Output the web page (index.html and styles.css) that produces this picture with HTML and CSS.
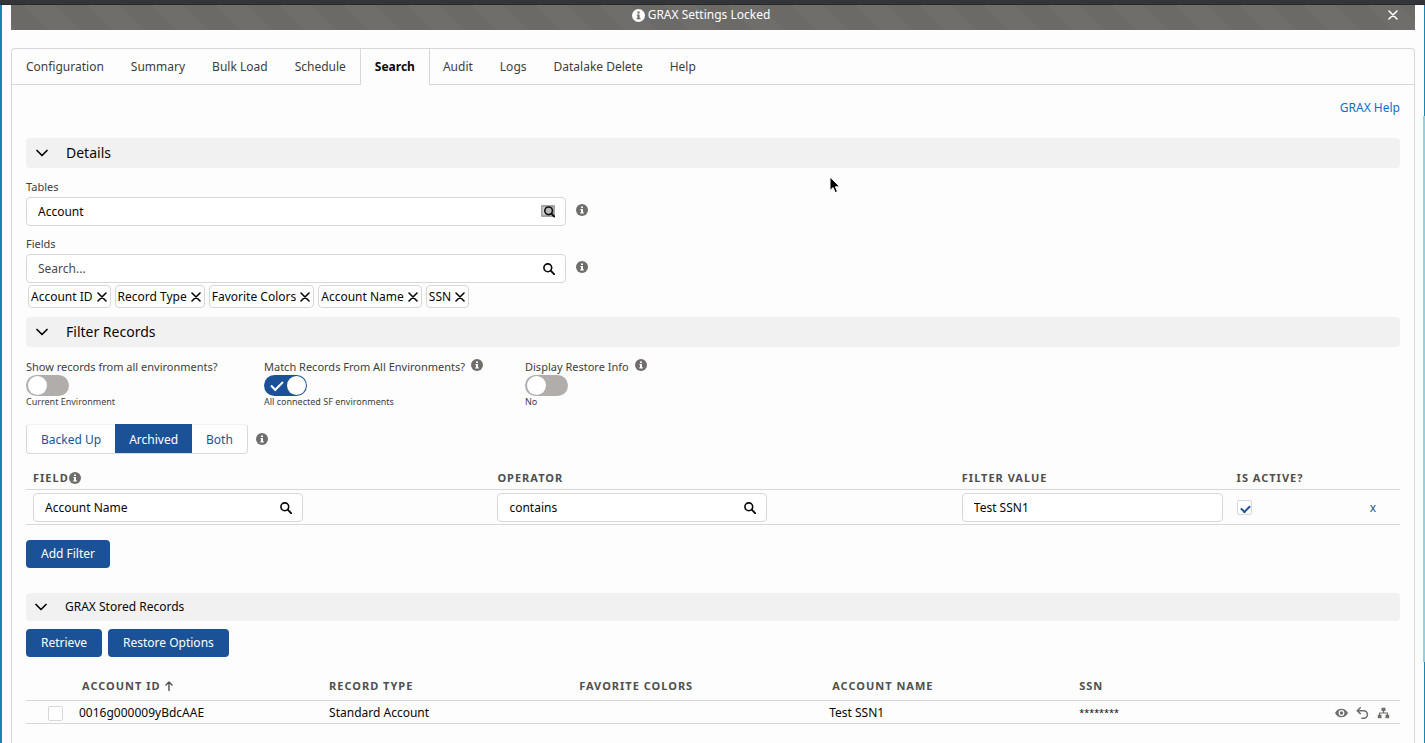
FILE: index.html
```
<!DOCTYPE html>
<html lang="en">
<head>
<meta charset="utf-8">
<title>GRAX Search</title>
<link rel="stylesheet" href="styles.css">
</head>
<body>
<svg class="sprite" aria-hidden="true">
  <symbol id="info" viewBox="0 0 12 12"><circle cx="6" cy="6" r="6" fill="currentColor"/><path class="cutout" d="M5 2.4h2v1.7H5zM4.4 5H7v3.2h.8v1.2H4.3V8.2H5V6.1h-.6z"/></symbol>
  <symbol id="search" viewBox="0 0 12 12"><circle cx="4.8" cy="4.8" r="3.9" fill="none" stroke="currentColor" stroke-width="1.6"/><path d="M7.7 7.7l3.6 3.6" stroke="currentColor" stroke-width="1.9" stroke-linecap="round"/></symbol>
  <symbol id="close" viewBox="0 0 10 10"><path d="M1 1l8 8M9 1l-8 8" fill="none" stroke="currentColor" stroke-width="1.6" stroke-linecap="round"/></symbol>
  <symbol id="chevron" viewBox="0 0 12 8"><path d="M1 1.5l5 5 5-5" fill="none" stroke="currentColor" stroke-width="1.7" stroke-linecap="round" stroke-linejoin="round"/></symbol>
</svg>
<div class="browser-edge"></div>
<div class="page">
  <div class="banner" role="status">
    <span class="banner-text"><svg class="banner-info"><use href="#info"/></svg>GRAX Settings Locked</span>
    <button class="banner-close" aria-label="Close"><svg class="x-icon"><use href="#close"/></svg></button>
  </div>
  <main class="card">
    <nav class="tabs">
      <a class="tab" href="#">Configuration</a>
      <a class="tab" href="#">Summary</a>
      <a class="tab" href="#">Bulk Load</a>
      <a class="tab" href="#">Schedule</a>
      <a class="tab active" href="#" aria-current="page">Search</a>
      <a class="tab" href="#">Audit</a>
      <a class="tab" href="#">Logs</a>
      <a class="tab" href="#">Datalake Delete</a>
      <a class="tab" href="#">Help</a>
    </nav>
    <div class="content">
      <div class="help-row"><a class="help-link" href="#">GRAX Help</a></div>

      <button class="section"><svg class="chevron"><use href="#chevron"/></svg>Details</button>
      <div class="lookups">
        <div class="lookup">
          <label class="label" for="tables">Tables</label>
          <div class="lookup-row">
            <div class="field"><input id="tables" class="field-input" type="text" value="Account">
              <svg class="table-search" viewBox="0 0 14 13"><rect x="0" y="0" width="14" height="12" rx="1" fill="#a3a3a3"/><rect x="1.5" y="2" width="3" height="8" fill="#d0d0d0"/><circle cx="7.6" cy="5.8" r="3.8" fill="#bbb" stroke="#111" stroke-width="1.6"/><path d="M10.4 8.6l2.8 2.9" stroke="#111" stroke-width="1.9" stroke-linecap="round"/></svg>
            </div>
            <svg class="info"><use href="#info"/></svg>
          </div>
        </div>
        <div class="lookup">
          <label class="label" for="fields">Fields</label>
          <div class="lookup-row">
            <div class="field"><input id="fields" class="field-input" type="text" placeholder="Search..."><svg class="search"><use href="#search"/></svg></div>
            <svg class="info"><use href="#info"/></svg>
          </div>
        </div>
      </div>
      <div class="chips">
        <span class="chip">Account ID<button class="chip-x" aria-label="Remove Account ID"><svg class="x-icon"><use href="#close"/></svg></button></span>
        <span class="chip">Record Type<button class="chip-x" aria-label="Remove Record Type"><svg class="x-icon"><use href="#close"/></svg></button></span>
        <span class="chip">Favorite Colors<button class="chip-x" aria-label="Remove Favorite Colors"><svg class="x-icon"><use href="#close"/></svg></button></span>
        <span class="chip">Account Name<button class="chip-x" aria-label="Remove Account Name"><svg class="x-icon"><use href="#close"/></svg></button></span>
        <span class="chip">SSN<button class="chip-x" aria-label="Remove SSN"><svg class="x-icon"><use href="#close"/></svg></button></span>
      </div>

      <button class="section"><svg class="chevron"><use href="#chevron"/></svg>Filter Records</button>
      <div class="toggles">
        <div class="toggle-group">
          <div class="toggle-head"><label class="label" for="show-all">Show records from all environments?</label></div>
          <input id="show-all" class="toggle" type="checkbox">
          <span class="toggle-note">Current Environment</span>
        </div>
        <div class="toggle-group">
          <div class="toggle-head"><label class="label" for="match-all">Match Records From All Environments?</label><svg class="info"><use href="#info"/></svg></div>
          <input id="match-all" class="toggle" type="checkbox" checked>
          <span class="toggle-note">All connected SF environments</span>
        </div>
        <div class="toggle-group">
          <div class="toggle-head"><label class="label" for="restore-info">Display Restore Info</label><svg class="info"><use href="#info"/></svg></div>
          <input id="restore-info" class="toggle" type="checkbox">
          <span class="toggle-note">No</span>
        </div>
      </div>
      <div class="scope">
        <div class="segments">
          <button class="segment">Backed Up</button><button class="segment selected">Archived</button><button class="segment">Both</button>
        </div>
        <svg class="info"><use href="#info"/></svg>
      </div>

      <table class="grid filters">
        <colgroup><col class="col-field"><col class="col-operator"><col class="col-value"><col class="col-active"><col></colgroup>
        <thead><tr>
          <th><span class="th-info">Field<svg class="info"><use href="#info"/></svg></span></th>
          <th>Operator</th><th>Filter Value</th><th>Is Active?</th><th></th>
        </tr></thead>
        <tbody><tr>
          <td><div class="field short"><input class="field-input" type="text" aria-label="Field" value="Account Name"><svg class="search"><use href="#search"/></svg></div></td>
          <td><div class="field short"><input class="field-input" type="text" aria-label="Operator" value="contains"><svg class="search"><use href="#search"/></svg></div></td>
          <td><div class="field"><input class="field-input" type="text" aria-label="Filter Value" value="Test SSN1"></div></td>
          <td><input class="check" type="checkbox" aria-label="Is active" checked></td>
          <td class="remove-cell"><button class="remove">x</button></td>
        </tr></tbody>
      </table>
      <div class="actions add"><button class="button">Add Filter</button></div>

      <button class="section small"><svg class="chevron"><use href="#chevron"/></svg>GRAX Stored Records</button>
      <div class="actions"><button class="button">Retrieve</button><button class="button">Restore Options</button></div>
      <table class="grid results">
        <colgroup><col class="col-check"><col class="col-data"><col class="col-data"><col class="col-data"><col class="col-data"><col></colgroup>
        <thead><tr>
          <th></th>
          <th class="inset"><span class="th-info sorted">Account ID<svg class="sort" viewBox="0 0 8 10"><path d="M4 9.5V1M1 4l3-3 3 3" fill="none" stroke="currentColor" stroke-width="1.4" stroke-linecap="round" stroke-linejoin="round"/></svg></span></th>
          <th>Record Type</th><th>Favorite Colors</th><th class="inset">Account Name</th><th>SSN</th>
        </tr></thead>
        <tbody><tr>
          <td class="check-cell"><input class="check" type="checkbox" aria-label="Select record"></td>
          <td>0016g000009yBdcAAE</td><td>Standard Account</td><td></td><td>Test SSN1</td>
          <td><div class="ssn-cell"><span class="masked">********</span>
            <span class="row-actions">
              <button class="icon-button" aria-label="View"><svg class="row-icon" viewBox="0 0 13 12"><path fill="currentColor" fill-rule="evenodd" d="M0 6C1.4 3.2 3.7 1.7 6.5 1.7S11.6 3.2 13 6c-1.4 2.8-3.7 4.3-6.5 4.3S1.4 8.8 0 6zm6.5-2.9a2.9 2.9 0 100 5.800 2.900 2.900 0 000-5.800z"/><circle cx="6.5" cy="6" r="1.7" fill="currentColor"/></svg></button>
              <button class="icon-button" aria-label="Restore"><svg class="row-icon" viewBox="0 0 13 12"><path d="M4.300 .8L1.200 3.700l3.100 2.900M1.400 3.700h6.300a3.700 3.700 0 010 7.500H5.800" fill="none" stroke="currentColor" stroke-width="1.5" stroke-linecap="round" stroke-linejoin="round"/></svg></button>
              <button class="icon-button" aria-label="Hierarchy"><svg class="row-icon" viewBox="0 0 13 12"><path fill="currentColor" d="M4.500 .7h4v3.300H7.100v1.500h3.900v2.300h1.200v3.500H8.500V7.800h1.300V6.600H3.200v1.200h1.300v3.500H.8V7.800H2V5.500h3.900V4H4.500z"/></svg></button>
            </span></div></td>
        </tr></tbody>
      </table>
    </div>
  </main>
  <div class="scroll-thumb"></div>
</div>
<svg class="cursor" viewBox="0 0 12 18" aria-hidden="true"><path d="M1 1v13.500l3.100-2.900 2.100 5 2.300-1-2.100-4.800h4.300z" fill="#000" stroke="#fff" stroke-width="1"/></svg>
</body>
</html>
```
FILE: styles.css
```
* { box-sizing: border-box; }
body {
  margin: 0;
  height: 100vh;
  overflow: hidden;
  display: flex;
  flex-direction: column;
  background: #fdfdfd;
  color: #080707;
  font: 12px/18px "Noto Sans", "Open Sans", sans-serif;
}
button, input { font: inherit; color: inherit; margin: 0; }
button { border: 0; background: none; padding: 0; }
a { text-decoration: none; }
svg { display: block; flex: none; }
.sprite { position: absolute; width: 0; height: 0; }
.cutout { fill: var(--cutout, #fff); }

.browser-edge { flex: none; height: 5px; background: #343538; border-bottom: 1px solid #2a2a2a; }
.page {
  position: relative;
  flex: 1;
  display: flex;
  flex-direction: column;
  min-height: 0;
  padding: 0 9px;
  border-left: 2px solid #1587b0;
  border-right: 1px solid #1587b0;
}
.scroll-thumb { position: absolute; top: 15%; bottom: 11%; right: -1px; width: 2px; background: #94cfdd; }

.banner {
  flex: none;
  display: grid;
  grid-template-columns: 1fr 24px;
  height: 25px;
  padding: 0 10px;
  color: #fff;
  background: #706e6a linear-gradient(45deg, rgba(0,0,0,.04) 25%, transparent 25%, transparent 50%, rgba(0,0,0,.04) 50%, rgba(0,0,0,.04) 75%, transparent 75%) 44px 0 / 64px 64px;
}
.banner-text { display: flex; justify-content: center; gap: 3px; height: 20px; align-items: center; }
.banner-info { width: 13px; height: 13px; --cutout: #6b6966; }
.banner-close { display: grid; place-items: center; height: 20px; }
.x-icon { width: 10px; height: 10px; }

.card {
  flex: 1;
  min-height: 0;
  margin-top: 18px;
  border: 1px solid #d8d8d8;
  border-bottom: 0;
  border-radius: 4px 4px 0 0;
}
.tabs { display: flex; height: 36px; padding-left: 1px; border-bottom: 1px solid #d8d8d8; }
.tab { padding: 0 13px; margin-right: 1px; line-height: 36px; color: #3e3e3c; }
.tab.active {
  height: 36px;
  padding: 0 14px;
  margin-right: 0;
  border: solid #d8d8d8;
  border-width: 0 1px;
  background: #fdfdfd;
  color: #080707;
  font-weight: 700;
}
.content { padding: 0 14px; }
.help-row { display: flex; justify-content: flex-end; padding: 14px 0 21px; }
.help-link { color: #0a70d0; }

.section {
  display: flex;
  align-items: center;
  gap: 18px;
  width: 100%;
  height: 30px;
  padding: 0 10px;
  border-radius: 4px;
  background: #f1f1f1;
  font-size: 14px;
  text-align: left;
}
.section.small { height: 28px; padding: 0 9px; font-size: 12px; }
.chevron { width: 12px; height: 8px; }

.label { display: block; font-size: 11px; line-height: 16px; color: #3e3e3c; }
.info { width: 12px; height: 12px; color: #706e6b; }
.lookups { display: grid; gap: 10px; padding: 11px 0 2px; }
.lookup-row { display: flex; align-items: center; gap: 10px; margin-top: 2px; }
.lookup-row .field { flex: 0 1 540px; }
.lookup-row .info { margin-bottom: 4px; }
.field {
  display: flex;
  align-items: center;
  height: 29px;
  padding: 0 10px 0 11px;
  border: 1px solid #d8d8d8;
  border-radius: 4px;
  background: #fff;
}
.field.short { max-width: 270px; }
.field-input { flex: 1; min-width: 0; height: 27px; padding: 0; border: 0; background: none; outline: 0; }
.field-input::placeholder { color: #4a4a48; opacity: 1; }
.search { width: 12px; height: 12px; }
.table-search { width: 14px; height: 13px; }

.chips { display: flex; flex-wrap: wrap; gap: 4px; padding: 0 2px 9px; }
.chip {
  display: flex;
  align-items: center;
  gap: 4px;
  height: 23px;
  padding: 0 3px 0 2px;
  border: 1px solid #d8d8d8;
  border-radius: 4px;
  background: #fff;
}

.toggles { display: grid; grid-template-columns: 238px 261px 1fr; padding: 12px 0 16px; }
.toggle-group { display: grid; justify-items: start; }
.toggle-head { display: flex; gap: 6px; }
.toggle {
  appearance: none;
  position: relative;
  width: 43px;
  height: 21px;
  border-radius: 11px;
  background: #b0adab;
}
.toggle::before {
  content: "";
  position: absolute;
  top: 1px;
  left: 2px;
  width: 19px;
  height: 19px;
  border-radius: 50%;
  background: #fff;
}
.toggle:checked { background: #1b5297; }
.toggle:checked::before { left: 23px; }
.toggle:checked::after {
  content: "";
  position: absolute;
  top: 6px;
  left: 7px;
  width: 10px;
  height: 5px;
  border: solid #fff;
  border-width: 0 0 2px 2px;
  transform: rotate(-45deg);
}
.toggle-note { font-size: 9px; line-height: 12px; color: #3e3e3c; }

.scope { display: flex; align-items: center; gap: 8px; }
.segments { display: flex; height: 30px; border: 1px solid #d8d8d8; border-top-color: #f1f1f1; border-radius: 4px; background: #fff; }
.segment { padding: 2px 14px 0; color: #1b5297; }
.segment.selected { margin-top: -1px; background: #1b5297; color: #fff; }

.grid { width: 100%; border-collapse: collapse; table-layout: fixed; }
.grid th, .grid td { padding: 2px 7px 0; text-align: left; font-weight: 400; border-bottom: 1px solid #d8d8d8; }
.grid th { font-size: 11px; font-weight: 700; letter-spacing: 1px; text-transform: uppercase; color: #514f4d; }
.th-info { display: flex; align-items: center; gap: 0; }
.th-info.sorted { gap: 4px; }
.sort { width: 8px; height: 10px; }
.filters { margin-top: 12px; }
.filters th { height: 23px; }
.filters td { height: 35px; }
.col-field, .col-operator { width: 33.8%; }
.col-value { width: 20%; }
.col-active { width: 8%; }
.check {
  appearance: none;
  display: block;
  position: relative;
  width: 15px;
  height: 15px;
  border: 1px solid #d8d8d8;
  border-radius: 2px;
  background: #fff;
}
.check:checked::before {
  content: "";
  position: absolute;
  top: 4px;
  left: 3px;
  width: 7px;
  height: 4px;
  border: solid #1b5297;
  border-width: 0 0 2px 2px;
  transform: rotate(-45deg);
}
.grid .remove-cell { padding-right: 24px; text-align: right; }
.remove { color: #1b5297; }

.actions { display: flex; gap: 6px; padding-top: 8px; }
.actions.add { padding: 15px 0 25px; }
.button { height: 28px; padding: 0 15px; border-radius: 4px; background: #1b5297; color: #fff; }

.results { margin-top: 14px; }
.results th { height: 30px; }
.results td { height: 23px; }
.results th.inset { padding-left: 10px; }
.col-check { width: 46px; }
.col-data { width: 18.2%; }
.grid .check-cell { padding-left: 22px; }
.ssn-cell { display: flex; align-items: center; justify-content: space-between; }
.masked { font-size: 9px; }
.row-actions { display: flex; gap: 8px; padding-right: 3px; color: #706e6b; }
.row-icon { width: 13px; height: 12px; }

.cursor { position: absolute; left: 829px; top: 176px; width: 12px; height: 18px; }
```
